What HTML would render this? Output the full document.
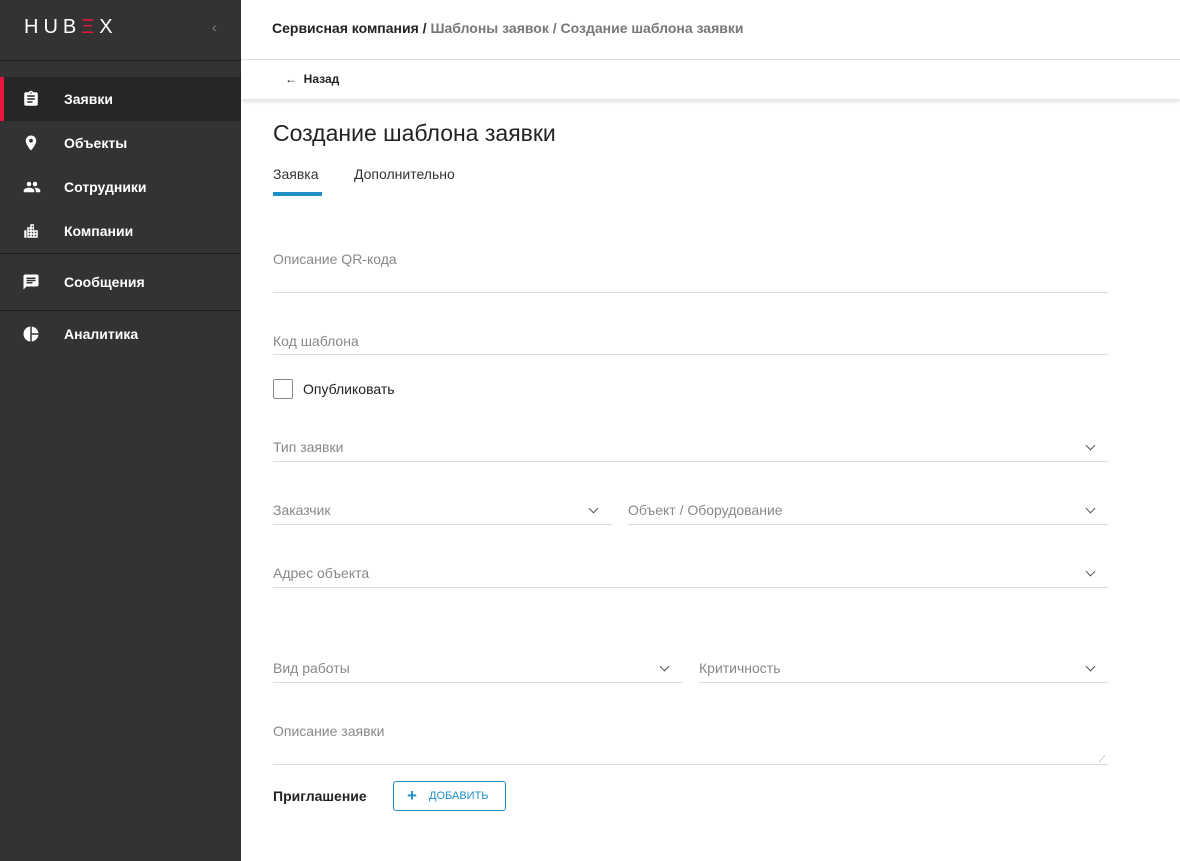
<!DOCTYPE html><html><head><meta charset="utf-8"><style>
*{box-sizing:border-box;margin:0;padding:0}
body{width:1180px;height:861px;font-family:"Liberation Sans",sans-serif;background:#fff;position:relative;overflow:hidden}
.sb{position:absolute;left:0;top:0;width:241px;height:861px;background:#333}
.logo{position:absolute;left:24px;top:16px;font-size:20px;letter-spacing:5px;color:#fff;font-weight:normal}
.hr{position:absolute;left:0;width:241px;height:1px;background:#1a1a1a}
.it{position:absolute;left:0;width:241px;height:44px;color:#fff;font-size:14px;font-weight:bold}
.it span{position:absolute;left:64px;top:14px}
.it svg{position:absolute;left:22px;top:13px}
.abs{position:absolute}
.lab{position:absolute;color:#888;font-size:14px}
.ln{position:absolute;height:1px;background:#ddd}
.chev{position:absolute;width:7px;height:7px;border-right:1.3px solid #555;border-bottom:1.3px solid #555;transform:rotate(45deg)}
</style></head><body>
<div class="sb">
<div class="logo">HUB<span style="color:#e5173f">Ξ</span>X</div>
<div class="abs" style="left:212px;top:19px;color:#888;font-size:14px">‹</div>
<div class="hr" style="top:60px"></div>
<div class="it" style="top:77px;background:#262626"><div class="abs" style="left:0;top:0;width:4px;height:44px;background:#e5173f"></div>
<svg width="18" height="18" viewBox="0 0 24 24"><path fill="#fff" d="M19 3h-4.2C14.4 1.8 13.3 1 12 1s-2.4.8-2.8 2H5c-1.1 0-2 .9-2 2v14c0 1.1.9 2 2 2h14c1.1 0 2-.9 2-2V5c0-1.1-.9-2-2-2zm-7 0c.6 0 1 .4 1 1s-.4 1-1 1-1-.4-1-1 .4-1 1-1zm2 14H7v-2h7v2zm3-4H7v-2h10v2zm0-4H7V7h10v2z"/></svg><span>Заявки</span></div>
<div class="it" style="top:121px"><svg width="18" height="18" viewBox="0 0 24 24"><path fill="#fff" d="M12 2C8.1 2 5 5.1 5 9c0 5.2 7 13 7 13s7-7.8 7-13c0-3.9-3.1-7-7-7zm0 9.5a2.5 2.5 0 110-5 2.5 2.5 0 010 5z"/></svg><span>Объекты</span></div>
<div class="it" style="top:165px"><svg width="20" height="18" viewBox="0 0 24 24"><path fill="#fff" d="M16 11c1.7 0 3-1.3 3-3s-1.3-3-3-3-3 1.3-3 3 1.3 3 3 3zm-8 0c1.7 0 3-1.3 3-3S9.7 5 8 5 5 6.3 5 8s1.3 3 3 3zm0 2c-2.3 0-7 1.2-7 3.5V19h14v-2.5C15 14.2 10.3 13 8 13zm8 0c-.3 0-.6 0-1 .1 1.2.8 2 2 2 3.4V19h6v-2.5c0-2.3-4.7-3.5-7-3.5z"/></svg><span>Сотрудники</span></div>
<div class="it" style="top:209px"><svg width="18" height="18" viewBox="0 0 24 24"><path fill="#fff" d="M7 21V7h4V3h5v8h5v10H7zm2-2h2v-2H9v2zm0-4h2v-2H9v2zm0-4h2V9H9v2zm4 8h2v-2h-2v2zm0-4h2v-2h-2v2zm0-4h2V9h-2v2zm0-4h2V5h-2v2zm4 12h2v-2h-2v2zm0-4h2v-2h-2v2zM3 21V11h3v10H3z"/></svg><span>Компании</span></div>
<div class="hr" style="top:253px"></div>
<div class="it" style="top:260px"><svg width="18" height="18" viewBox="0 0 24 24"><path fill="#fff" d="M20 2H4c-1.1 0-2 .9-2 2v18l4-4h14c1.1 0 2-.9 2-2V4c0-1.1-.9-2-2-2zM6 9h12v2H6V9zm8 5H6v-2h8v2zm4-6H6V6h12v2z"/></svg><span>Сообщения</span></div>
<div class="hr" style="top:310px"></div>
<div class="it" style="top:312px"><svg width="18" height="18" viewBox="0 0 24 24"><path fill="#fff" d="M11 2v20C5.9 21.5 2 17.2 2 12S5.9 2.5 11 2zm2 0v9h9c-.5-4.7-4.3-8.5-9-9zm0 11v9c4.7-.5 8.5-4.3 9-9h-9z"/></svg><span>Аналитика</span></div>
</div>
<div class="abs" style="left:272px;top:20px;font-size:14px;font-weight:bold;color:#222">Сервисная компания / <span style="color:#777">Шаблоны заявок / Создание шаблона заявки</span></div>
<div class="abs" style="left:241px;top:59px;width:939px;height:1px;background:#e0e0e0"></div>
<div class="abs" style="left:241px;top:60px;width:939px;height:39px;box-shadow:0 3px 4px rgba(0,0,0,.12)"></div>
<div class="abs" style="left:285px;top:72px;font-size:12px;font-weight:bold;color:#222">←&nbsp; Назад</div>
<div class="abs" style="left:273px;top:120px;font-size:23px;color:#222;font-weight:500">Создание шаблона заявки</div>
<div class="abs" style="left:273px;top:166px;font-size:14px;color:#333">Заявка</div>
<div class="abs" style="left:273px;top:192px;width:49px;height:4px;background:#1e8fc6"></div>
<div class="abs" style="left:354px;top:166px;font-size:14px;color:#333">Дополнительно</div>
<div class="lab" style="left:273px;top:251px">Описание QR-кода</div><div class="ln" style="left:273px;top:292px;width:835px"></div>
<div class="lab" style="left:273px;top:333px">Код шаблона</div><div class="ln" style="left:273px;top:354px;width:835px"></div>
<div class="abs" style="left:273px;top:379px;width:20px;height:20px;border:1.5px solid #888;border-radius:2px"></div>
<div class="abs" style="left:303px;top:381px;font-size:14px;color:#222">Опубликовать</div>
<div class="lab" style="left:273px;top:439px">Тип заявки</div><div class="ln" style="left:273px;top:461px;width:835px"></div><div class="chev" style="left:1087px;top:442px"></div>
<div class="lab" style="left:273px;top:502px">Заказчик</div><div class="ln" style="left:273px;top:524px;width:339px"></div><div class="chev" style="left:590px;top:505px"></div>
<div class="lab" style="left:628px;top:502px">Объект / Оборудование</div><div class="ln" style="left:628px;top:524px;width:480px"></div><div class="chev" style="left:1087px;top:505px"></div>
<div class="lab" style="left:273px;top:565px">Адрес объекта</div><div class="ln" style="left:273px;top:587px;width:835px"></div><div class="chev" style="left:1087px;top:568px"></div>
<div class="lab" style="left:273px;top:660px">Вид работы</div><div class="ln" style="left:273px;top:682px;width:410px"></div><div class="chev" style="left:661px;top:663px"></div>
<div class="lab" style="left:699px;top:660px">Критичность</div><div class="ln" style="left:699px;top:682px;width:409px"></div><div class="chev" style="left:1087px;top:663px"></div>
<div class="lab" style="left:273px;top:723px">Описание заявки</div><div class="ln" style="left:273px;top:764px;width:835px"></div>
<div class="abs" style="left:1099px;top:754px;color:#999;font-size:9px">⟋</div>
<div class="abs" style="left:273px;top:788px;font-size:14px;font-weight:bold;color:#222">Приглашение</div>
<div class="abs" style="left:393px;top:781px;width:113px;height:30px;border:1px solid #1e8fc6;border-radius:3px;color:#1e8fc6;font-size:11px;line-height:28px"><span style="position:absolute;left:13px;font-size:17px;font-weight:bold">+</span><span style="position:absolute;left:35px">ДОБАВИТЬ</span></div>
</body></html>
